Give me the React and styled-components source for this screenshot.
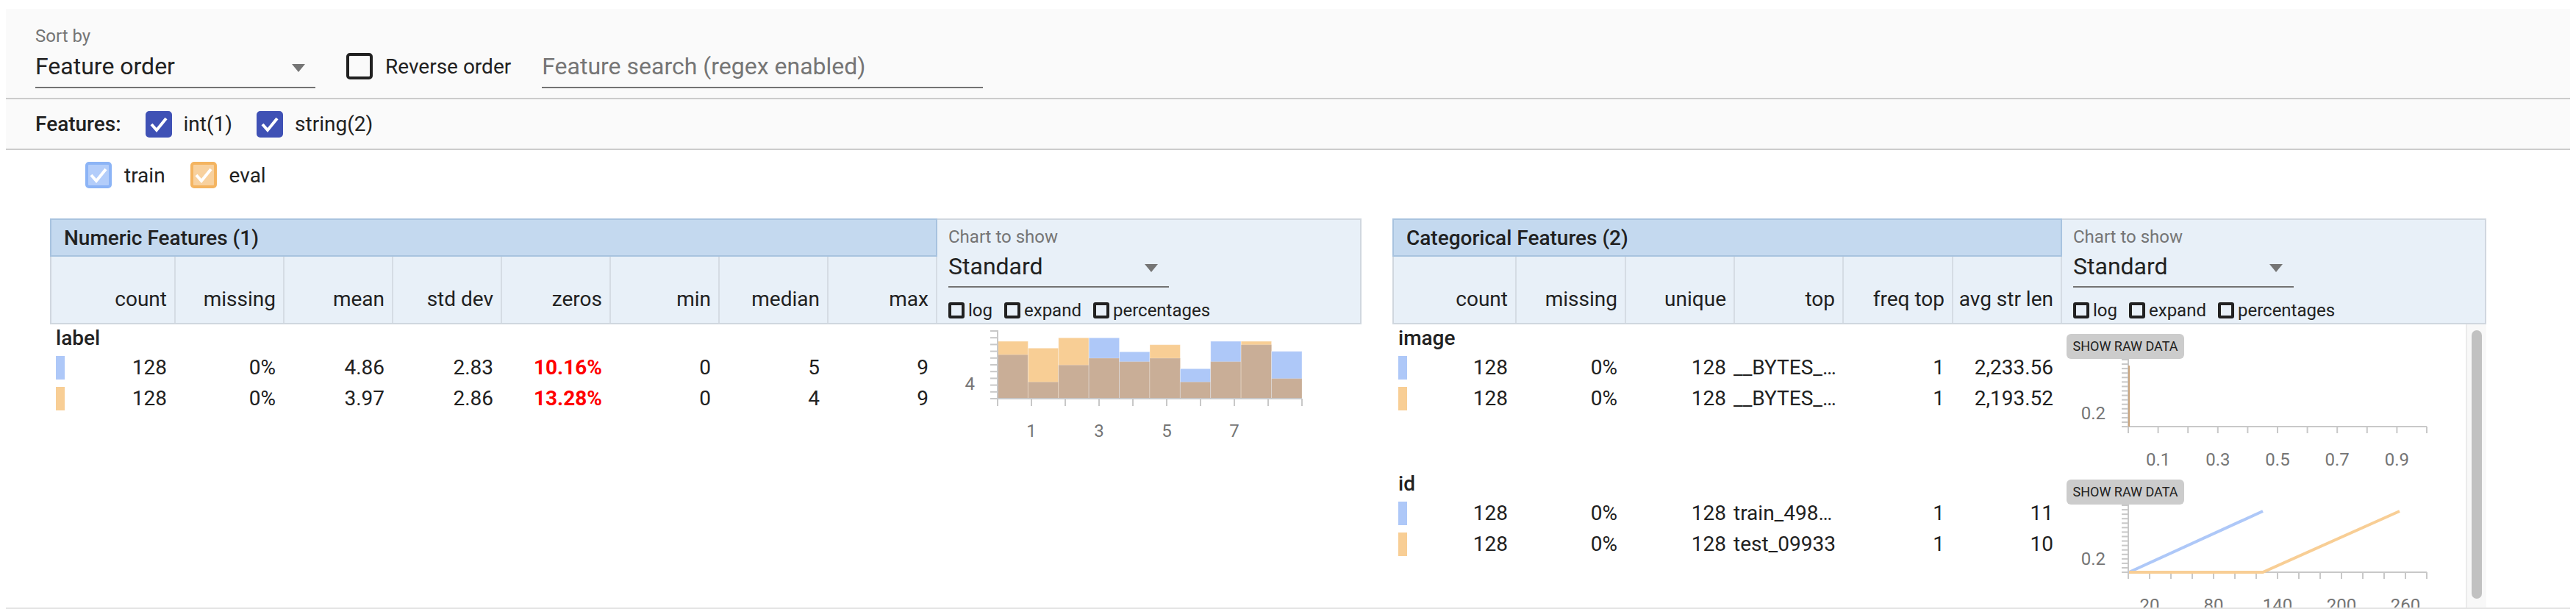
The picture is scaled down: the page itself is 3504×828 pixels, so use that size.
import React from "react";
import styled, { createGlobalStyle } from "styled-components";

const GlobalStyle = createGlobalStyle`
  html, body { margin: 0; padding: 0; background: #ffffff; }
  body { font-family: Roboto, "Liberation Sans", sans-serif; color: #212121; }
  * { box-sizing: border-box; }
`;

const BLUE = "#aec8f8";
const ORANGE = "#f8ce95";
const BROWN = "#c9ae97";
const AXIS = "#c8c8c8";

const Page = styled.div`
  padding: 12px 8px 0;
`;

const TopBar = styled.div`
  display: flex;
  align-items: flex-end;
  gap: 42px;
  padding: 23px 40px 13px;
  background: #fafafa;
  border-bottom: 2px solid #cccccc;
`;

const Field = styled.div`
  display: flex;
  flex-direction: column;
  gap: ${(p) => p.$gap || 7}px;
`;

const FieldLabel = styled.div`
  font-size: 24px;
  line-height: 28px;
  color: #757575;
`;

const Select = styled.div`
  width: ${(p) => p.$width}px;
  display: flex;
  align-items: center;
  justify-content: space-between;
  padding: 0 ${(p) => p.$arrowGap}px ${(p) => p.$bottom}px 0;
  font-size: 32px;
  line-height: 40px;
  color: #212121;
  border-bottom: 2px solid #737373;
  svg {
    margin-top: 4px;
  }
`;

const Search = styled.div`
  width: 600px;
  padding-bottom: 8px;
  font-size: 32px;
  line-height: 40px;
  color: #757575;
  border-bottom: 2px solid #737373;
`;

const CheckItem = styled.div`
  display: inline-flex;
  align-items: center;
  gap: ${(p) => p.$gap}px;
  height: ${(p) => p.$height}px;
  margin-bottom: ${(p) => p.$mb || 0}px;
  font-size: ${(p) => p.$font}px;
  color: #212121;
  white-space: nowrap;
`;

const Box = styled.span`
  display: inline-flex;
  align-items: center;
  justify-content: center;
  flex-shrink: 0;
  width: ${(p) => p.$size}px;
  height: ${(p) => p.$size}px;
  border: 4px solid ${(p) => p.$stroke};
  border-radius: ${(p) => (p.$size > 30 ? 5 : 3)}px;
  background: ${(p) => p.$fill};
`;

const BOXES = {
  outline: { size: 36, stroke: "#212121", fill: "transparent", check: false },
  indigo: { size: 36, stroke: "#3f51b5", fill: "#3f51b5", check: true },
  train: { size: 36, stroke: "#8cb4f6", fill: "#b3cdfa", check: true },
  eval: { size: 36, stroke: "#f4b460", fill: "#f8d19e", check: true },
  mini: { size: 22, stroke: "#212121", fill: "transparent", check: false },
};

const Checkbox = ({ kind }) => {
  const b = BOXES[kind];
  return (
    <Box $size={b.size} $stroke={b.stroke} $fill={b.fill}>
      {b.check && (
        <svg width="28" height="28" viewBox="0 0 28 28">
          <polyline points="4,14 11,22 24,6" fill="none" stroke="#ffffff" strokeWidth="4" />
        </svg>
      )}
    </Box>
  );
};

const Arrow = () => (
  <svg width="18" height="11" viewBox="0 0 18 11">
    <polygon points="0,0 18,0 9,11" fill="#757575" />
  </svg>
);

const FeaturesBar = styled.div`
  display: flex;
  align-items: center;
  gap: 33px;
  height: 69px;
  padding-left: 40px;
  background: #fafafa;
  border-bottom: 2px solid #cccccc;
  font-size: 28px;
`;

const FeaturesLabel = styled.span`
  font-weight: 500;
`;

const Legend = styled.div`
  display: flex;
  gap: 34px;
  margin-top: 16px;
  padding-left: 108px;
`;

const Tables = styled.div`
  display: flex;
  gap: 42px;
  margin-top: 41px;
  padding-left: 60px;
  border-bottom: 2px solid #e3e3e3;
`;

const Section = styled.div`
  display: flex;
  flex-direction: column;
`;

const SectionHead = styled.div`
  display: flex;
`;

const HeadStats = styled.div`
  display: flex;
  flex-direction: column;
`;

const TitleBand = styled.div`
  display: flex;
  align-items: center;
  height: 52px;
  padding-left: 17px;
  background: #c4d9ef;
  border: 2px solid #a8c3df;
  font-size: 28px;
  font-weight: 500;
`;

const ColumnRow = styled.div`
  display: grid;
  grid-template-columns: ${(p) => p.$cols};
  height: 92px;
  background: #e8f0f8;
  border-bottom: 2px solid #d0d7df;
  border-left: 2px solid #d0d7df;
`;

const HeadCell = styled.div`
  display: flex;
  align-items: flex-end;
  justify-content: flex-end;
  padding: 0 10px 16px 0;
  font-size: 28px;
  line-height: 33px;
  border-right: 2px solid #d5dce4;
  white-space: nowrap;
`;

const ChartControl = styled.div`
  width: 577px;
  height: 144px;
  display: flex;
  flex-direction: column;
  padding: 9px 15px 0;
  background: #e8f0f8;
  border: 2px solid #d0d7df;
  border-left: none;
`;

const MiniChecks = styled.div`
  display: flex;
  align-items: center;
  gap: 16px;
  height: 34px;
  margin-top: 14px;
`;

const SectionBody = styled.div`
  display: flex;
  height: 385px;
  overflow: hidden;
`;

const BodyContent = styled.div`
  flex: 1;
  overflow: hidden;
`;

const ScrollTrack = styled.div`
  display: flex;
  width: 28px;
  padding: 8px 6px 12px 6px;
  background: #f8f8f8;
  border-left: 2px solid #ebebeb;
`;

const ScrollThumb = styled.div`
  flex: 1;
  background: #c1c1c1;
  border-radius: 8px;
`;

const FeatureBlock = styled.div`
  display: flex;
  height: 198px;
`;

const StatsCol = styled.div`
  display: flex;
  flex-direction: column;
`;

const NameRow = styled.div`
  height: 38px;
  line-height: 38px;
  padding-left: 8px;
  font-size: 28px;
  font-weight: 500;
`;

const DataRow = styled.div`
  display: grid;
  grid-template-columns: ${(p) => p.$cols};
  height: 42px;
`;

const Cell = styled.div`
  display: flex;
  align-items: center;
  justify-content: ${(p) => (p.$first ? "space-between" : p.$lead ? "flex-start" : "flex-end")};
  padding: 0 ${(p) => (p.$lead ? 0 : 10)}px 0 ${(p) => (p.$first ? 8 : 0)}px;
  font-size: 28px;
  line-height: 42px;
  font-weight: ${(p) => (p.$alert ? 700 : 400)};
  color: ${(p) => (p.$alert ? "#ff0000" : "#212121")};
  white-space: nowrap;
`;

const Swatch = styled.span`
  width: 12px;
  height: 32px;
  background: ${(p) => p.$color};
`;

const ChartCell = styled.div`
  display: flex;
  flex-direction: column;
  align-items: flex-start;
`;

const RawButton = styled.div`
  width: 160px;
  height: 34px;
  margin: 13px 0 0 8px;
  border-radius: 6px;
  background: #cccccc;
  font-size: 18px;
  line-height: 34px;
  text-align: center;
  color: #212121;
`;

const AxisText = styled.text`
  font-family: Roboto, "Liberation Sans", sans-serif;
  font-size: 24px;
  fill: #757575;
`;

// [eval, train] bar heights
const HIST = [
  [78, 59.7], [68.7, 22.7], [82.7, 45.7], [55, 82.7], [50.3, 63.7],
  [73.3, 55], [22.7, 40.7], [50.3, 78], [78, 73.3], [27.3, 64.3],
];

const Histogram = () => {
  const x0 = 84;
  const base = 101;
  const w = 41.4;
  return (
    <svg width="577" height="198">
      {HIST.map(([o, b], i) => {
        const x = x0 + i * w;
        const hi = Math.max(o, b);
        const lo = Math.min(o, b);
        return (
          <g key={i}>
            <rect x={x} y={base - hi} width={w} height={hi} fill={o > b ? ORANGE : BLUE} stroke="#ffffff" strokeOpacity="0.35" />
            <rect x={x} y={base - lo} width={w} height={lo} fill={BROWN} stroke="#ffffff" strokeOpacity="0.2" />
          </g>
        );
      })}
      {Array.from({ length: 11 }, (_, i) => (
        <line key={i} x1="74" x2={x0} y1={9 + i * 9.2} y2={9 + i * 9.2} stroke={AXIS} strokeWidth="2" />
      ))}
      <line x1={x0} x2={x0} y1="8" y2={base} stroke={AXIS} strokeWidth="2" />
      <line x1={x0} x2="498" y1={base} y2={base} stroke={AXIS} strokeWidth="2" />
      {Array.from({ length: 10 }, (_, i) => (
        <line key={i} x1={x0 + i * 46} x2={x0 + i * 46} y1={base} y2={base + 10} stroke={AXIS} strokeWidth="2" />
      ))}
      <AxisText x="53" y="89" textAnchor="end">4</AxisText>
      {["1", "3", "5", "7"].map((t, i) => (
        <AxisText key={t} x={x0 + (1 + i * 2) * 46} y="153" textAnchor="middle">{t}</AxisText>
      ))}
    </svg>
  );
};

const LineChart = ({ ticks, labels, children }) => {
  const x0 = 92;
  const base = 92;
  const step = 406 / (ticks - 1);
  return (
    <svg width="549" height="151">
      {Array.from({ length: 16 }, (_, i) => (
        <line key={i} x1="83" x2={x0} y1={1 + i * 6.07} y2={1 + i * 6.07} stroke={AXIS} strokeWidth="2" />
      ))}
      <line x1={x0} x2={x0} y1="0" y2={base} stroke={AXIS} strokeWidth="2" />
      <line x1={x0} x2="498" y1={base} y2={base} stroke={AXIS} strokeWidth="2" />
      {Array.from({ length: ticks }, (_, i) => (
        <line key={i} x1={x0 + i * step} x2={x0 + i * step} y1={base} y2={base + 9} stroke={AXIS} strokeWidth="2" />
      ))}
      {children}
      <AxisText x="61" y="82" textAnchor="end">0.2</AxisText>
      {labels.map(([t, idx]) => (
        <AxisText key={t} x={x0 + idx * step} y="145" textAnchor="middle">{t}</AxisText>
      ))}
    </svg>
  );
};

const NUM_COLS = "169px repeat(7, 148px)";
const CAT_COLS = "167px 149px 148px 148px 149px 148px";

const ChartControlPanel = () => (
  <ChartControl>
    <Field $gap={6}>
      <FieldLabel>Chart to show</FieldLabel>
      <Select $width={300} $arrowGap={15} $bottom={7}>
        <span>Standard</span>
        <Arrow />
      </Select>
    </Field>
    <MiniChecks>
      {["log", "expand", "percentages"].map((t) => (
        <CheckItem key={t} $gap={5} $height={34} $font={24}>
          <Checkbox kind="mini" />
          {t}
        </CheckItem>
      ))}
    </MiniChecks>
  </ChartControl>
);

const StatsRows = ({ cols, name, rows, leadCol }) => (
  <StatsCol>
    <NameRow>{name}</NameRow>
    {rows.map((r, i) => (
      <DataRow key={i} $cols={cols}>
        {r.values.map((v, j) => (
          <Cell key={j} $first={j === 0} $alert={r.alert === j} $lead={leadCol === j}>
            {j === 0 && <Swatch $color={r.color} />}
            {v}
          </Cell>
        ))}
      </DataRow>
    ))}
  </StatsCol>
);

const App = () => (
  <Page>
    <GlobalStyle />
    <TopBar>
      <Field>
        <FieldLabel>Sort by</FieldLabel>
        <Select $width={381} $arrowGap={14} $bottom={8}>
          <span>Feature order</span>
          <Arrow />
        </Select>
      </Field>
      <CheckItem $gap={17} $height={40} $font={28} $mb={10}>
        <Checkbox kind="outline" />
        Reverse order
      </CheckItem>
      <Search>Feature search (regex enabled)</Search>
    </TopBar>

    <FeaturesBar>
      <FeaturesLabel>Features:</FeaturesLabel>
      <CheckItem $gap={16} $height={36} $font={28}>
        <Checkbox kind="indigo" />
        int(1)
      </CheckItem>
      <CheckItem $gap={16} $height={36} $font={28}>
        <Checkbox kind="indigo" />
        string(2)
      </CheckItem>
    </FeaturesBar>

    <Legend>
      <CheckItem $gap={17} $height={36} $font={28}>
        <Checkbox kind="train" />
        train
      </CheckItem>
      <CheckItem $gap={17} $height={36} $font={28}>
        <Checkbox kind="eval" />
        eval
      </CheckItem>
    </Legend>

    <Tables>
      <Section>
        <SectionHead>
          <HeadStats>
            <TitleBand>Numeric Features (1)</TitleBand>
            <ColumnRow $cols={NUM_COLS}>
              {["count", "missing", "mean", "std dev", "zeros", "min", "median", "max"].map((h) => (
                <HeadCell key={h}>{h}</HeadCell>
              ))}
            </ColumnRow>
          </HeadStats>
          <ChartControlPanel />
        </SectionHead>
        <SectionBody>
          <BodyContent>
            <FeatureBlock>
              <StatsRows
                cols={NUM_COLS}
                name="label"
                rows={[
                  { color: BLUE, alert: 4, values: ["128", "0%", "4.86", "2.83", "10.16%", "0", "5", "9"] },
                  { color: ORANGE, alert: 4, values: ["128", "0%", "3.97", "2.86", "13.28%", "0", "4", "9"] },
                ]}
              />
              <ChartCell>
                <Histogram />
              </ChartCell>
            </FeatureBlock>
          </BodyContent>
        </SectionBody>
      </Section>

      <Section>
        <SectionHead>
          <HeadStats>
            <TitleBand>Categorical Features (2)</TitleBand>
            <ColumnRow $cols={CAT_COLS}>
              {["count", "missing", "unique", "top", "freq top", "avg str len"].map((h) => (
                <HeadCell key={h}>{h}</HeadCell>
              ))}
            </ColumnRow>
          </HeadStats>
          <ChartControlPanel />
        </SectionHead>
        <SectionBody>
          <BodyContent>
            <FeatureBlock>
              <StatsRows
                cols={CAT_COLS}
                name="image"
                leadCol={3}
                rows={[
                  { color: BLUE, values: ["128", "0%", "128", "__BYTES_…", "1", "2,233.56"] },
                  { color: ORANGE, values: ["128", "0%", "128", "__BYTES_…", "1", "2,193.52"] },
                ]}
              />
              <ChartCell>
                <RawButton>SHOW RAW DATA</RawButton>
                <LineChart ticks={11} labels={[["0.1", 1], ["0.3", 3], ["0.5", 5], ["0.7", 7], ["0.9", 9]]}>
                  <line x1="93" x2="93" y1="9" y2="92" stroke="#c9a47e" strokeWidth="2" />
                </LineChart>
              </ChartCell>
            </FeatureBlock>
            <FeatureBlock>
              <StatsRows
                cols={CAT_COLS}
                name="id"
                leadCol={3}
                rows={[
                  { color: BLUE, values: ["128", "0%", "128", "train_498…", "1", "11"] },
                  { color: ORANGE, values: ["128", "0%", "128", "test_09933", "1", "10"] },
                ]}
              />
              <ChartCell>
                <RawButton>SHOW RAW DATA</RawButton>
                <LineChart ticks={15} labels={[["20", 1], ["80", 4], ["140", 7], ["200", 10], ["260", 13]]}>
                  <polyline points="93,92 275,9" fill="none" stroke={BLUE} strokeWidth="4" />
                  <polyline points="93,92 275,92 461,9" fill="none" stroke={ORANGE} strokeWidth="4" />
                </LineChart>
              </ChartCell>
            </FeatureBlock>
          </BodyContent>
          <ScrollTrack>
            <ScrollThumb />
          </ScrollTrack>
        </SectionBody>
      </Section>
    </Tables>
  </Page>
);

export default App;
